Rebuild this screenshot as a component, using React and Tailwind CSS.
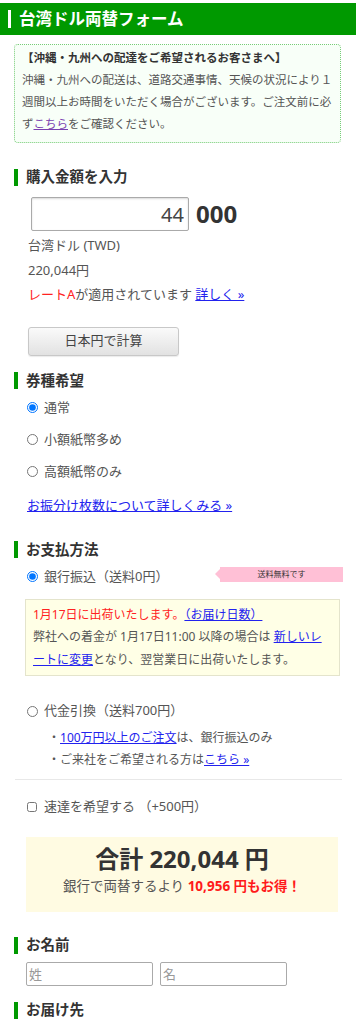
import React from 'react';

const font = "font-['Noto_Sans','Noto_Sans_CJK_JP',sans-serif]";

const Heading = ({ children, className = '' }) => (
  <h2 className={`flex items-center h-5 text-[14.5px] font-bold text-[#333] ${className}`}>
    <span className="w-[4px] h-[17px] bg-[#009900] mr-2" />
    {children}
  </h2>
);

const Radio = ({ label, checked, name }) => (
  <label className="flex items-center h-8 pl-[13px] text-[13px] text-[#555]">
    <input
      type="radio"
      name={name}
      defaultChecked={checked}
      className="w-[11px] h-[11px] m-0 mr-[6px] accent-[#0075ff]"
    />
    {label}
  </label>
);

const App = () => {
  return (
    <div className={`w-[356px] bg-white pt-[3px] pb-4 text-[#555] ${font}`}>
      {/* Title bar */}
      <h1 className="flex items-center h-8 bg-[#009900] pl-2 text-white text-[16.5px] font-bold">
        <span className="w-[3px] h-[18px] bg-white mr-2" />
        台湾ドル両替フォーム
      </h1>

      <div className="px-[14px]">
        {/* Notice */}
        <div className="mt-[9px] mr-[1px] border border-dotted border-[#77cc77] rounded-[4px] bg-[#f8fff8] pl-[7px] pr-[6px] pt-[2px] pb-[7px] text-[11.5px] leading-[22px]">
          <p className="font-bold text-[#333]">【沖縄・九州への配達をご希望されるお客さまへ】</p>
          <p>
            沖縄・九州への配送は、道路交通事情、天候の状況により１週間以上お時間をいただく場合がございます。ご注文前に必ず
            <a href="#" className="text-[#7a3fb0] underline">こちら</a>
            をご確認ください。
          </p>
        </div>

        {/* Amount */}
        <Heading className="mt-[24px]">購入金額を入力</Heading>
        <div className="flex items-center mt-[10px] ml-[17px]">
          <input
            defaultValue="44"
            className="w-[158px] h-[34px] border border-[#aaa] rounded-[2px] shadow-[inset_0_1px_2px_rgba(0,0,0,0.15)] text-right pr-[4px] text-[20px] text-[#444] outline-none"
          />
          <span className="ml-[7px] text-[24px] font-bold text-[#333] leading-none">000</span>
        </div>
        <div className="ml-[14px] mt-[2px] text-[13px] leading-[24.5px]">
          <p>台湾ドル (TWD)</p>
          <p>220,044円</p>
          <p>
            <span className="text-[#ff2222]">レートA</span>が適用されています{' '}
            <a href="#" className="text-[#2222ee] underline">詳しく »</a>
          </p>
        </div>
        <button className="mt-[20px] ml-[14px] w-[151px] h-[29px] border border-[#c8c8c8] rounded-[3px] bg-gradient-to-b from-[#fafafa] to-[#e2e2e2] shadow-[0_1px_1px_rgba(0,0,0,0.08)] text-[13px] text-[#444]">
          日本円で計算
        </button>

        {/* Note type */}
        <Heading className="mt-[15px]">券種希望</Heading>
        <div className="mt-[1px]">
          <Radio name="kind" label="通常" checked />
          <Radio name="kind" label="小額紙幣多め" />
          <Radio name="kind" label="高額紙幣のみ" />
        </div>
        <a href="#" className="block mt-[7px] ml-[13px] h-5 leading-5 text-[13px] text-[#2222ee] underline">
          お振分け枚数について詳しくみる »
        </a>

        {/* Payment */}
        <Heading className="mt-[25px]">お支払方法</Heading>
        <div className="relative mt-[1px]">
          <Radio name="pay" label="銀行振込（送料0円）" checked />
          <div className="absolute left-[206px] top-[6px] w-[123px] h-[15px] bg-[#ffc0d6] flex items-center justify-center text-[8px] text-[#333]">
            <span className="absolute left-[-5px] top-[2px] w-0 h-0 border-y-[5.5px] border-y-transparent border-r-[5px] border-r-[#ffc0d6]" />
            送料無料です
          </div>
        </div>
        <div className="mt-[6px] ml-[11px] mr-[2px] border border-[#e4e4cc] bg-[#ffffe6] px-[7px] py-[4px] text-[12px] leading-[22.5px]">
          <p>
            <span className="text-[#ff2222]">1月17日に出荷いたします。</span>
            <a href="#" className="text-[#2222ee] underline">（お届け日数）</a>
          </p>
          <p>
            弊社への着金が 1月17日11:00 以降の場合は{' '}
            <a href="#" className="text-[#2222ee] underline">新しいレートに変更</a>
            となり、翌営業日に出荷いたします。
          </p>
        </div>

        <div className="mt-[19px]">
          <Radio name="pay" label="代金引換（送料700円）" />
        </div>
        <ul className="ml-[34px] text-[12px] leading-[22px]">
          <li>
            ・<a href="#" className="text-[#2222ee] underline">100万円以上のご注文</a>は、銀行振込のみ
          </li>
          <li>
            ・ご来社をご希望される方は<a href="#" className="text-[#2222ee] underline">こちら »</a>
          </li>
        </ul>
        <div className="mt-[8px] ml-[1px] border-t border-[#e8e8e8]" />

        <label className="flex items-center h-8 mt-[11px] pl-[13px] text-[13px] text-[#555]">
          <input type="checkbox" className="w-[10px] h-[10px] m-0 mr-[7px]" />
          速達を希望する （+500円）
        </label>

        {/* Total */}
        <div className="mt-[14px] ml-[12px] mr-[4px] h-[75px] bg-[#fffbe2] flex flex-col items-center pt-[7px]">
          <p className="text-[24px] font-bold text-[#333] leading-[30px]">合計 220,044 円</p>
          <p className="mt-[2px] text-[13.5px] leading-[20px]">
            銀行で両替するより <span className="font-bold text-[#ff1a1a]">10,956 円もお得！</span>
          </p>
        </div>

        {/* Name */}
        <Heading className="mt-[23px]">お名前</Heading>
        <div className="flex gap-[7px] mt-[7px] ml-[12px]">
          <input
            placeholder="姓"
            className="w-[127px] h-[24px] border border-[#aaa] rounded-[2px] px-[2px] text-[13px] placeholder-[#999] outline-none"
          />
          <input
            placeholder="名"
            className="w-[127px] h-[24px] border border-[#aaa] rounded-[2px] px-[2px] text-[13px] placeholder-[#999] outline-none"
          />
        </div>

        <Heading className="mt-[14px]">お届け先</Heading>
      </div>
    </div>
  );
};

export default App;
